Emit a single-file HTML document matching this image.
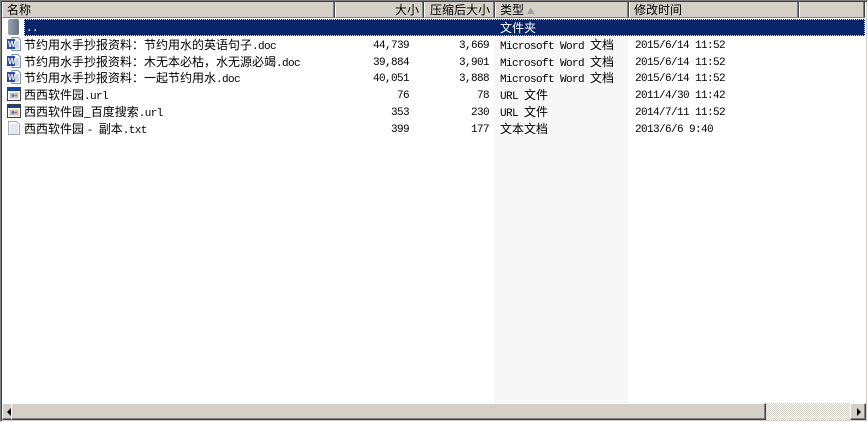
<!DOCTYPE html>
<html><head><meta charset="utf-8"><style>
*{margin:0;padding:0;box-sizing:border-box}
body{width:868px;height:422px;background:#fff;position:relative;overflow:hidden;font:12px "Noto Sans CJK SC","WenQuanYi Zen Hei",sans-serif;color:#000}
.frame{position:absolute;left:0;top:0;width:868px;height:422px;border-left:1px solid #808080;border-top:1px solid #808080;border-right:1px solid #fff;border-bottom:1px solid #fff;box-shadow:inset 1px 1px 0 #404040,inset -1px -1px 0 #d4d0c8}
.hdr{position:absolute;top:2px;height:16px;background:#d4d0c8;border-right:1px solid #404040;border-left:1px solid #fff;border-bottom:1px solid #808080;line-height:15px;font-size:12px;padding:0 4px;white-space:nowrap;overflow:hidden;box-shadow:inset -1px 0 0 #808080}
.typecol{position:absolute;left:494px;top:18px;width:134px;height:385px;background:#f7f7f7}
.row{position:absolute;left:0;width:866px;height:17px;line-height:17px;white-space:nowrap}
.row>span{position:absolute;top:0}
.m{font-family:"Liberation Mono",monospace;font-size:11px;letter-spacing:-0.6px;vertical-align:baseline}
.row>span.m{top:2px}
.r{text-align:right}
.sel{position:absolute;left:24px;top:19px;width:841px;height:17px;background:#0a246a;outline:1px dotted #f0e080;outline-offset:-1px}
.ic{position:absolute;left:7px;width:14px;height:14px;top:1px}
</style></head><body>
<div class="frame"></div>
<div class="hdr" style="left:2px;width:333px">名称</div>
<div class="hdr r" style="left:335px;width:89px">大小</div>
<div class="hdr r" style="left:424px;width:71px">压缩后大小</div>
<div class="hdr" style="left:495px;width:134px">类型 <span style="color:#a0a0a0;font-size:8px">▲</span></div>
<div class="hdr" style="left:629px;width:170px">修改时间</div>
<div class="hdr" style="left:799px;width:66px"></div>
<div class="typecol"></div>
<div class="sel"></div>
<div class="row" style="top:19px;color:#fff">
<div class="ic" style="left:8px;width:11px;height:16px;top:0;background:linear-gradient(90deg,#9aa4b0,#6a7480);border-radius:2px"></div>
<span style="left:26px" class="m">..</span><span style="left:500px">文件夹</span></div>

<div class="row" style="top:36px"><svg class="ic" viewBox="0 0 14 14"><path d="M5 0.5h6l2.5 2.5v10.5h-8.5z" fill="#fff" stroke="#8090b0"/><path d="M7 5h5M7 7h5M7 9h5M7 11h5" stroke="#9ab"/><rect x="0" y="2" width="8" height="10" fill="#2b4fa8"/><text x="1" y="10" font-size="8" fill="#fff" font-family="Liberation Sans" font-weight="bold">W</text></svg>
<span style="left:24px">节约用水手抄报资料：节约用水的英语句子<span class="m">.doc</span></span><span class="m r" style="left:300px;width:109px">44,739</span><span class="m r" style="left:420px;width:69px">3,669</span><span style="left:500px"><span class="m">Microsoft Word </span>文档</span><span class="m" style="left:635px">2015/6/14 11:52</span></div>

<div class="row" style="top:53px"><svg class="ic" viewBox="0 0 14 14"><path d="M5 0.5h6l2.5 2.5v10.5h-8.5z" fill="#fff" stroke="#8090b0"/><path d="M7 5h5M7 7h5M7 9h5M7 11h5" stroke="#9ab"/><rect x="0" y="2" width="8" height="10" fill="#2b4fa8"/><text x="1" y="10" font-size="8" fill="#fff" font-family="Liberation Sans" font-weight="bold">W</text></svg>
<span style="left:24px">节约用水手抄报资料：木无本必枯，水无源必竭<span class="m">.doc</span></span><span class="m r" style="left:300px;width:109px">39,884</span><span class="m r" style="left:420px;width:69px">3,901</span><span style="left:500px"><span class="m">Microsoft Word </span>文档</span><span class="m" style="left:635px">2015/6/14 11:52</span></div>

<div class="row" style="top:69px"><svg class="ic" viewBox="0 0 14 14"><path d="M5 0.5h6l2.5 2.5v10.5h-8.5z" fill="#fff" stroke="#8090b0"/><path d="M7 5h5M7 7h5M7 9h5M7 11h5" stroke="#9ab"/><rect x="0" y="2" width="8" height="10" fill="#2b4fa8"/><text x="1" y="10" font-size="8" fill="#fff" font-family="Liberation Sans" font-weight="bold">W</text></svg>
<span style="left:24px">节约用水手抄报资料：一起节约用水<span class="m">.doc</span></span><span class="m r" style="left:300px;width:109px">40,051</span><span class="m r" style="left:420px;width:69px">3,888</span><span style="left:500px"><span class="m">Microsoft Word </span>文档</span><span class="m" style="left:635px">2015/6/14 11:52</span></div>

<div class="row" style="top:86px"><svg class="ic" viewBox="0 0 14 14"><rect x="0.5" y="0.5" width="13" height="13" fill="#fff" stroke="#404040"/><rect x="1" y="1" width="12" height="3" fill="#1040a0"/><rect x="3" y="6" width="8" height="5" fill="#e8e0c0" stroke="#808080" stroke-width=".5"/><circle cx="6" cy="8.5" r="1.5" fill="#3070d0"/><circle cx="9" cy="8.5" r="1" fill="#d04040"/></svg>
<span style="left:24px">西西软件园<span class="m">.url</span></span><span class="m r" style="left:300px;width:109px">76</span><span class="m r" style="left:420px;width:69px">78</span><span style="left:500px"><span class="m">URL </span>文件</span><span class="m" style="left:635px">2011/4/30 11:42</span></div>

<div class="row" style="top:103px"><svg class="ic" viewBox="0 0 14 14"><rect x="0.5" y="0.5" width="13" height="13" fill="#fff" stroke="#404040"/><rect x="1" y="1" width="12" height="3" fill="#1040a0"/><rect x="3" y="6" width="8" height="5" fill="#e8e0c0" stroke="#808080" stroke-width=".5"/><circle cx="6" cy="8.5" r="1.5" fill="#3070d0"/><circle cx="9" cy="8.5" r="1" fill="#d04040"/></svg>
<span style="left:24px">西西软件园_百度搜索<span class="m">.url</span></span><span class="m r" style="left:300px;width:109px">353</span><span class="m r" style="left:420px;width:69px">230</span><span style="left:500px"><span class="m">URL </span>文件</span><span class="m" style="left:635px">2014/7/11 11:52</span></div>

<div class="row" style="top:120px"><svg class="ic" viewBox="0 0 14 14"><path d="M1.5 0.5h8l3 3v10h-11z" fill="#fff" stroke="#a0a8b8"/><path d="M3 4h8M3 6h8M3 8h8M3 10h8M3 12h8" stroke="#c8d0dc"/></svg>
<span style="left:24px">西西软件园 <span class="m">- </span>副本<span class="m">.txt</span></span><span class="m r" style="left:300px;width:109px">399</span><span class="m r" style="left:420px;width:69px">177</span><span style="left:500px">文本文档</span><span class="m" style="left:635px">2013/6/6 9:40</span></div>

<div style="position:absolute;left:2px;top:403px;width:864px;height:17px;background:repeating-conic-gradient(#d4d0c8 0 25%,#fff 0 50%) 0 0/2px 2px"></div>
<div style="position:absolute;left:2px;top:403px;width:16px;height:17px;background:#d4d0c8;border:1px solid;border-color:#fff #404040 #404040 #fff;box-shadow:inset -1px -1px #808080"><div style="position:absolute;left:4px;top:4px;border:4px solid transparent;border-right-color:#000;border-left:0"></div></div>
<div style="position:absolute;left:11px;top:403px;width:755px;height:17px;background:#d4d0c8;border:1px solid;border-color:#fff #404040 #404040 #fff;box-shadow:inset -1px -1px #808080"></div>
<div style="position:absolute;left:850px;top:403px;width:16px;height:17px;background:#d4d0c8;border:1px solid;border-color:#fff #404040 #404040 #fff;box-shadow:inset -1px -1px #808080"><div style="position:absolute;left:6px;top:4px;border:4px solid transparent;border-left-color:#000;border-right:0"></div></div>
</body></html>
